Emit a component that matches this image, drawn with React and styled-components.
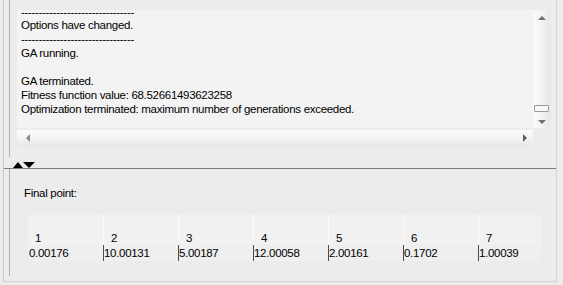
import React from "react";
import styled, { createGlobalStyle } from "styled-components";

const Global = createGlobalStyle`
  html, body { margin: 0; padding: 0; background: #ececec; }
  body {
    font-family: "Liberation Sans", Arial, sans-serif;
    font-size: 11.5px;
    letter-spacing: -0.3px;
    color: #000;
  }
`;

const Window = styled.div`
  width: 563px;
  height: 285px;
  overflow: hidden;
  background: #ececec;
`;

const Frame = styled.div`
  margin-left: 3px;
  width: 554px;
  height: 282px;
  box-sizing: border-box;
  border-left: 1px solid #c9c9c9;
  border-right: 1px solid #d6d6d6;
  border-bottom: 1px solid #d2d2d2;
  display: flex;
  flex-direction: column;
`;

const Upper = styled.div`
  height: 157px;
  margin-left: 5px;
  border-left: 1px solid #b2b2b2;
  padding: 10px 0 0 7px;
  box-sizing: border-box;
`;

const ScrollView = styled.div`
  display: grid;
  grid-template-columns: 516px 17px;
  grid-template-rows: 118px 18px;
`;

const TextArea = styled.div`
  background: #f3f3f3;
  padding-left: 4px;
`;

const Lines = styled.div`
  white-space: pre;
`;

const Line = styled.div`
  height: ${({ partial }) => (partial ? "8px" : "14px")};
  line-height: ${({ partial }) => (partial ? "4px" : "14px")};
`;

const VScroll = styled.div`
  background: linear-gradient(to right, #fbfbfb, #f1f1f1 60%, #e6e6e6);
  display: flex;
  flex-direction: column;
  align-items: center;
  padding: 6px 0 4px;
  box-sizing: border-box;
`;

const HScroll = styled.div`
  background: linear-gradient(to bottom, #fcfcfc, #f2f2f2 60%, #e7e7e7);
  margin-top: 2px;
  height: 16px;
  display: flex;
  align-items: center;
  justify-content: space-between;
  padding: 0 6px 0 9px;
`;

const Corner = styled.div`
  background: #ececec;
`;

const Spacer = styled.div`
  flex: 1;
`;

const Thumb = styled.div`
  width: 13px;
  height: 5px;
  border: 1px solid #9a9a9a;
  border-radius: 1px;
  background: #f7f7f7;
  margin-bottom: 8px;
`;

const Arrow = styled.div`
  width: 0;
  height: 0;
  ${({ dir, color = "#707070", w = 4, h = 4 }) =>
    dir === "up"
      ? `border-left:${w}px solid transparent;border-right:${w}px solid transparent;border-bottom:${h}px solid ${color};`
      : dir === "down"
      ? `border-left:${w}px solid transparent;border-right:${w}px solid transparent;border-top:${h}px solid ${color};`
      : dir === "left"
      ? `border-top:${w}px solid transparent;border-bottom:${w}px solid transparent;border-right:${h}px solid ${color};`
      : `border-top:${w}px solid transparent;border-bottom:${w}px solid transparent;border-left:${h}px solid ${color};`}
`;

const Splitter = styled.div`
  height: 12px;
  box-sizing: border-box;
  border-bottom: 1px solid #7c7c7c;
  display: flex;
  align-items: flex-end;
  padding: 0 0 0 9px;
`;

const Lower = styled.div`
  flex: 1;
  margin-left: 5px;
  margin-bottom: 5px;
  border-left: 1px solid #b2b2b2;
  padding: 17px 0 0 14px;
`;

const Label = styled.div`
  line-height: 14px;
  height: 14px;
`;

const Table = styled.div`
  margin: 15px 0 0 4px;
  width: 513px;
  display: grid;
  grid-template-columns: repeat(6, 75px) 63px;
  grid-template-rows: 30px 16px;
  background: #f1f1f1;
`;

const HeadCell = styled.div`
  background: #f1f1f1;
  border-left: ${({ first }) => (first ? "none" : "1px solid #fbfbfb")};
  display: flex;
  align-items: flex-end;
  padding: 0 0 0 7px;
  line-height: 14px;
`;

const ValueCell = styled.div`
  background: #efefef;
  border-left: ${({ first }) => (first ? "1px solid transparent" : "1px solid #4a4a4a")};
  line-height: 17px;
  white-space: nowrap;
  overflow: hidden;
`;

const dash = "--------------------------------";

const lines = [
  dash,
  "Options have changed.",
  dash,
  "GA running.",
  "",
  "GA terminated.",
  "Fitness function value: 68.52661493623258",
  "Optimization terminated: maximum number of generations exceeded.",
];

const values = ["0.00176", "10.00131", "5.00187", "12.00058", "2.00161", "0.1702", "1.00039"];

export default function App() {
  return (
    <Window>
      <Global />
      <Frame>
        <Upper>
          <ScrollView>
            <TextArea>
              <Lines>
                {lines.map((l, i) => (
                  <Line key={i} partial={i === 0}>
                    {l}
                  </Line>
                ))}
              </Lines>
            </TextArea>
            <VScroll>
              <Arrow dir="up" w={4} h={4} />
              <Spacer />
              <Thumb />
              <Arrow dir="down" w={4} h={4} />
            </VScroll>
            <HScroll>
              <Arrow dir="left" w={4} h={4} color="#8a8a8a" />
              <Arrow dir="right" w={4} h={4} color="#606060" />
            </HScroll>
            <Corner />
          </ScrollView>
        </Upper>
        <Splitter>
          <Arrow dir="up" w={5} h={6} color="#000" />
          <Arrow dir="down" w={6} h={6} color="#000" />
        </Splitter>
        <Lower>
          <Label>Final point:</Label>
          <Table>
            {values.map((_, i) => (
              <HeadCell key={"h" + i} first={i === 0}>
                {i + 1}
              </HeadCell>
            ))}
            {values.map((v, i) => (
              <ValueCell key={"v" + i} first={i === 0}>
                {v}
              </ValueCell>
            ))}
          </Table>
        </Lower>
      </Frame>
    </Window>
  );
}
